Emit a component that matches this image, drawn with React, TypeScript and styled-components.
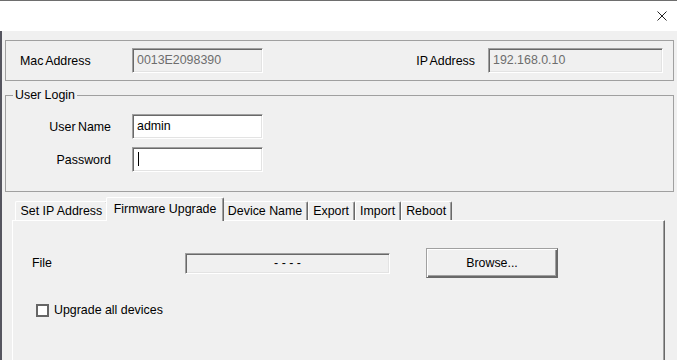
import styled, { createGlobalStyle } from "styled-components";

const GlobalStyle = createGlobalStyle`
  * {
    box-sizing: border-box;
  }
  html,
  body {
    margin: 0;
    padding: 0;
    background: #f0f0f0;
  }
  body {
    font-family: "Liberation Sans", Arial, sans-serif;
    font-size: 12.4px;
    color: #000;
  }
`;

const Window = styled.div`
  width: 677px;
  height: 360px;
  display: flex;
  flex-direction: column;
  overflow: hidden;
  background: #f0f0f0;
`;

const TitleBar = styled.div`
  height: 31px;
  flex-shrink: 0;
  background: #fff;
  border-top: 1px solid #6e6e6e;
  display: flex;
  align-items: center;
  justify-content: flex-end;
  padding-right: 10px;
`;

const Body = styled.div`
  flex: 1;
  display: flex;
  flex-direction: column;
  border-left: 2px solid #55555f;
  padding: 9px 3px 0 3px;
  min-height: 0;
`;

const InfoBox = styled.div`
  height: 41px;
  flex-shrink: 0;
  border: 1px solid #a0a0a0;
  display: flex;
  align-items: center;
  padding: 0 10px 0 14px;
`;

const Label = styled.span<{ $width?: number; $right?: boolean }>`
  width: ${(p) => (p.$width ? `${p.$width}px` : "auto")};
  flex-shrink: 0;
  text-align: ${(p) => (p.$right ? "right" : "left")};
  word-spacing: -1px;
  white-space: nowrap;
`;

const Spacer = styled.div`
  flex: 1;
`;

const TextBox = styled.div<{
  $width: number;
  $height?: number;
  $readOnly?: boolean;
  $disabled?: boolean;
  $center?: boolean;
}>`
  width: ${(p) => p.$width}px;
  height: ${(p) => p.$height ?? 25}px;
  flex-shrink: 0;
  display: flex;
  align-items: ${(p) => (p.$center ? "center" : "flex-start")};
  justify-content: ${(p) => (p.$center ? "center" : "flex-start")};
  padding: ${(p) => (p.$center ? "0" : "4px 0 0 4px")};
  line-height: 14px;
  background: ${(p) => (p.$readOnly || p.$disabled ? "#f0f0f0" : "#fff")};
  color: ${(p) => (p.$disabled ? "#6d6d6d" : "#000")};
  border: 1px solid;
  border-color: #a0a0a0 #fff #fff #a0a0a0;
  box-shadow: inset 1px 1px 0 #696969, inset -1px -1px 0 #e3e3e3;
`;

const Caret = styled.span`
  display: inline-block;
  width: 1px;
  height: 14px;
  background: #000;
  margin-left: 1px;
`;

const LoginGroup = styled.fieldset`
  flex-shrink: 0;
  margin: 7px 0 0;
  padding: 12px 0 19px;
  border: 1px solid #a0a0a0;
  min-width: 0;
`;

const Legend = styled.legend`
  margin-left: 7px;
  padding: 0 2px;
  line-height: 14px;
  font-size: 12.4px;
`;

const LoginGrid = styled.div`
  display: grid;
  grid-template-columns: 105px 131px;
  column-gap: 21px;
  row-gap: 8px;
  align-items: center;
`;

const TabControl = styled.div`
  flex: 1;
  display: flex;
  flex-direction: column;
  margin: 5px 0 0 7px;
  width: 653px;
  min-height: 0;
`;

const TabRow = styled.div`
  height: 23px;
  flex-shrink: 0;
  display: flex;
  align-items: flex-start;
  padding-left: 3px;
`;

const Tab = styled.div<{ $active?: boolean }>`
  position: relative;
  z-index: ${(p) => (p.$active ? 1 : 0)};
  margin-top: ${(p) => (p.$active ? 0 : 4)}px;
  height: ${(p) => (p.$active ? 24 : 19)}px;
  margin-left: ${(p) => (p.$active ? -2 : 0)}px;
  margin-right: ${(p) => (p.$active ? -2 : 0)}px;
  padding: ${(p) => (p.$active ? "0 7px 2px" : "0 4.5px")};
  display: flex;
  align-items: center;
  white-space: nowrap;
  background: #f0f0f0;
  border-top: 1px solid #fff;
  border-left: 1px solid #fff;
  border-right: 1px solid #696969;
  border-radius: 2px 2px 0 0;
  box-shadow: inset -1px 0 0 #a0a0a0;
`;

const Panel = styled.div`
  flex: 1;
  border-top: 1px solid #fff;
  border-left: 1px solid #fff;
  border-right: 1px solid #696969;
  box-shadow: inset -1px 0 0 #a0a0a0;
  padding: 27px 0 0 19px;
`;

const FileRow = styled.div`
  height: 30px;
  display: flex;
  align-items: center;
`;

const Button = styled.div`
  width: 132px;
  height: 30px;
  margin-left: 36px;
  display: flex;
  align-items: center;
  justify-content: center;
  background: #f0f0f0;
  border: 1px solid;
  border-color: #a0a0a0 #696969 #696969 #a0a0a0;
  box-shadow: inset 1px 1px 0 #fff, inset -1px -1px 0 #696969,
    inset -2px -2px 0 #a0a0a0;
`;

const CheckRow = styled.div`
  margin: 24px 0 0 4px;
  height: 16px;
  display: flex;
  align-items: center;
  gap: 5px;
`;

const CheckBox = styled.span`
  width: 13px;
  height: 13px;
  border: 2px solid #666;
  background: #fff;
`;

const tabs = [
  "Set IP Address",
  "Firmware Upgrade",
  "Device Name",
  "Export",
  "Import",
  "Reboot",
];

export default function App() {
  return (
    <>
      <GlobalStyle />
      <Window>
        <TitleBar>
          <svg width="10" height="10" viewBox="0 0 10 10">
            <path d="M0.5 0.5 L9.5 9.5 M9.5 0.5 L0.5 9.5" stroke="#222" strokeWidth="1" />
          </svg>
        </TitleBar>
        <Body>
          <InfoBox>
            <Label $width={112}>Mac Address</Label>
            <TextBox $width={131} $disabled>
              0013E2098390
            </TextBox>
            <Spacer />
            <Label style={{ marginRight: 13 }}>IP Address</Label>
            <TextBox $width={175} $disabled>
              192.168.0.10
            </TextBox>
          </InfoBox>

          <LoginGroup>
            <Legend>User Login</Legend>
            <LoginGrid>
              <Label $right>User Name</Label>
              <TextBox $width={131}>admin</TextBox>
              <Label $right>Password</Label>
              <TextBox $width={131}>
                <Caret />
              </TextBox>
            </LoginGrid>
          </LoginGroup>

          <TabControl>
            <TabRow>
              {tabs.map((t) => (
                <Tab key={t} $active={t === "Firmware Upgrade"}>
                  {t}
                </Tab>
              ))}
            </TabRow>
            <Panel>
              <FileRow>
                <Label $width={153}>File</Label>
                <TextBox $width={205} $height={21} $readOnly $center>
                  - - - -
                </TextBox>
                <Button>Browse...</Button>
              </FileRow>
              <CheckRow>
                <CheckBox />
                <span>Upgrade all devices</span>
              </CheckRow>
            </Panel>
          </TabControl>
        </Body>
      </Window>
    </>
  );
}
